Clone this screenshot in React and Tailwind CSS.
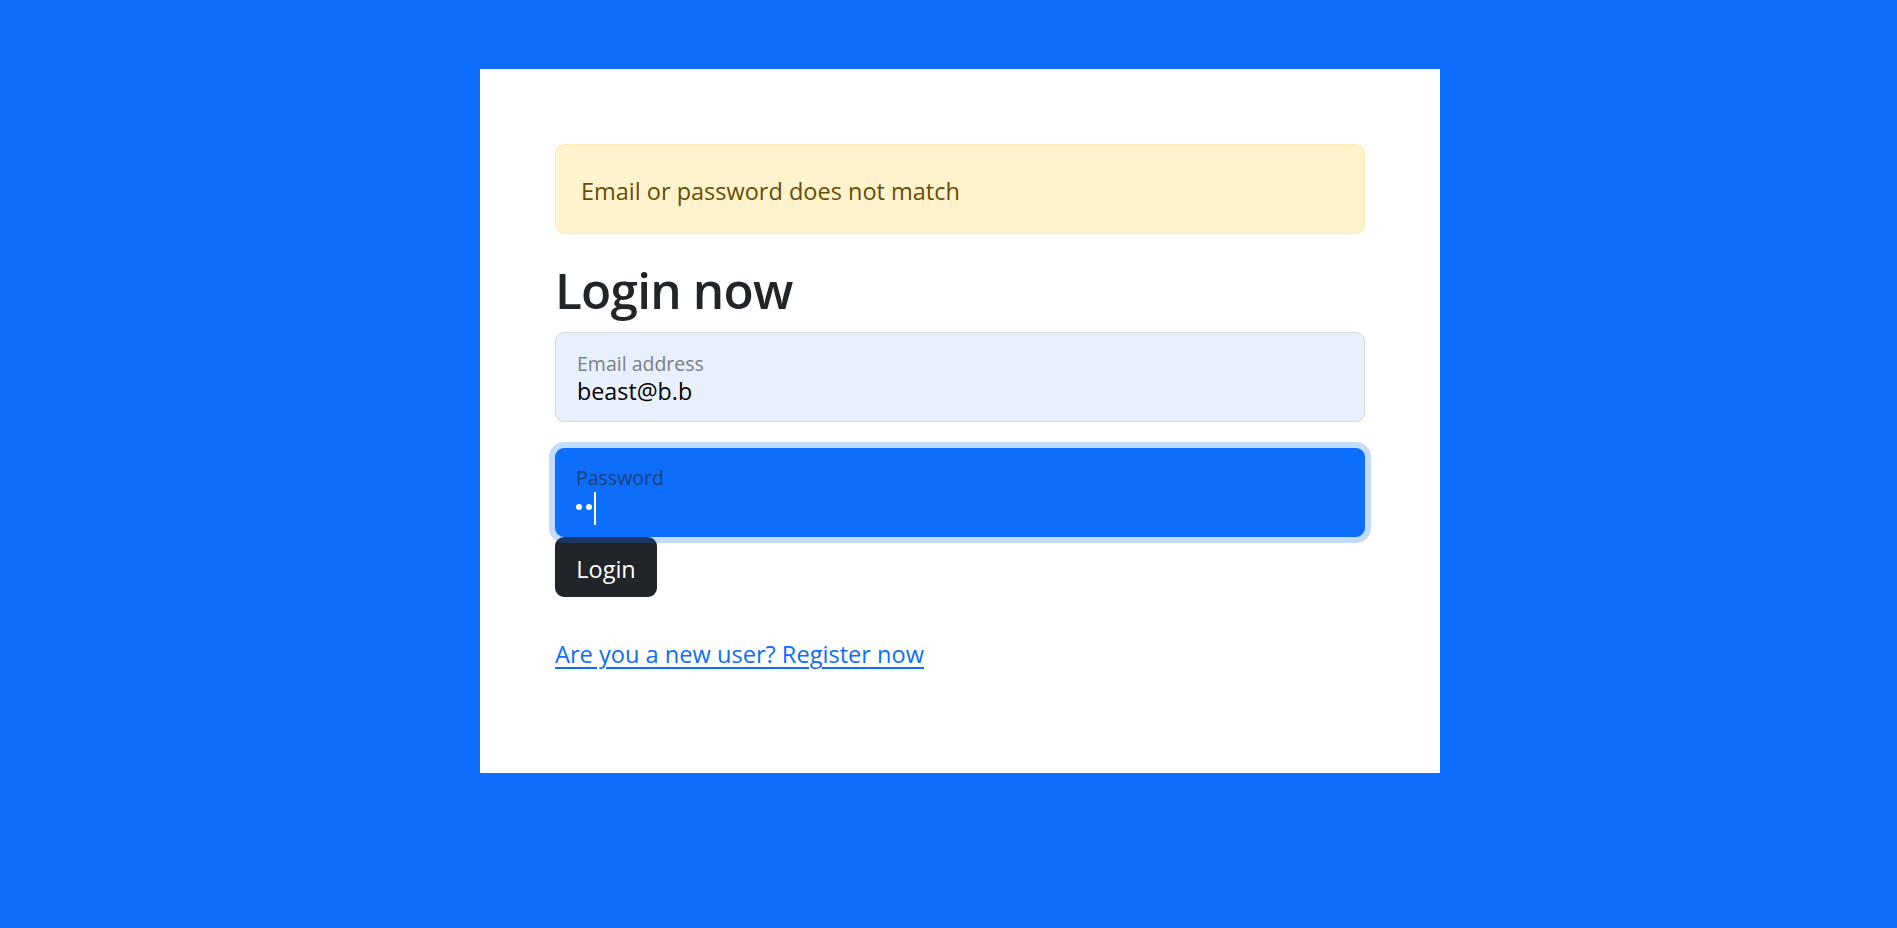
export default function App() {
  const font = { fontFamily: '"Open Sans", "Noto Sans", sans-serif' };
  return (
    <div className="w-full h-[928px] bg-[#0d6efd] pt-[69px] overflow-hidden" style={font}>
      <div className="ml-[480px] w-[960px] h-[704px] bg-white px-[75px] pt-[75px]">
        <div className="h-[90px] rounded-[9px] border-[1.5px] border-[#ffecb5] bg-[#fff3cd] text-[#664d03] flex items-center px-[25px] pt-[3px] text-[23.5px] leading-[36px]">
          Email or password does not match
        </div>
        <h1 className="mt-[25px] text-[49.5px] leading-[62px] font-semibold text-[#212529] tracking-[-0.8px]">
          Login now
        </h1>
        <div className="mt-[11px] h-[90px] rounded-[9px] border-[1.5px] border-[#d3d8e0] bg-[#e8f0fe] pl-[21px] pt-[21px]">
          <div className="text-[19.5px] leading-[20px] text-[#7a7f85]">Email address</div>
          <div className="mt-[5px] text-[23.3px] leading-[24px] text-black">beast@b.b</div>
        </div>
        <div className="relative z-10 mt-[26px] h-[89px] rounded-[9px] bg-[#0d6efd] ring-[6px] ring-[#0d6efd]/25 pl-[21px] pt-[20px]">
          <div className="text-[19.5px] leading-[20px] text-[#1a3f73]">Password</div>
          <div className="mt-[4px] h-[33px] flex items-center">
            <span className="inline-block w-[6px] h-[6px] rounded-full bg-white -mt-[4px]"></span>
            <span className="inline-block ml-[4px] w-[6px] h-[6px] rounded-full bg-white -mt-[4px]"></span>
            <span className="inline-block ml-[2px] w-[2px] h-[33px] bg-white"></span>
          </div>
        </div>
        <button className="block h-[60px] w-[102px] rounded-[9px] bg-[#212529] text-white text-[23.5px] leading-[36px] pt-[3px]">
          Login
        </button>
        <a href="#" className="block mt-[39px] w-fit text-[23.6px] leading-[36px] text-[#0d6efd] underline underline-offset-[4px] decoration-[1.5px]">
          Are you a new user? Register now
        </a>
      </div>
    </div>
  );
}
